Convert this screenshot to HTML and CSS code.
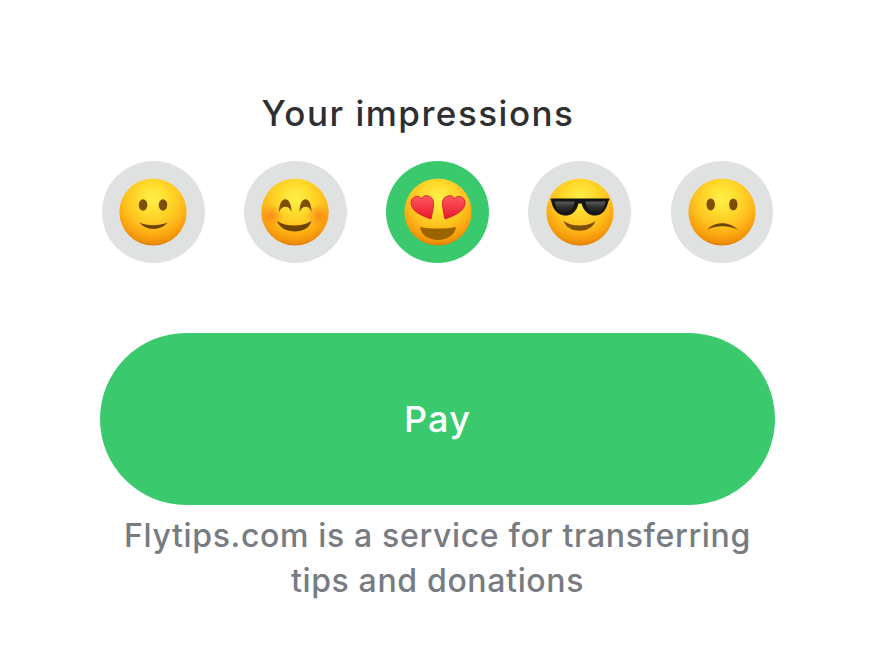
FILE: index.html
```html
<!DOCTYPE html>
<html lang="en">
<head>
	<meta charset="UTF-8">
	<title>Your impressions</title>
	<link rel="stylesheet" href="styles.css">
</head>
<body>
	<svg class="defs" width="0" height="0" aria-hidden="true">
		<defs>
			<radialGradient id="skin" cx="50%" cy="30%" r="72%">
				<stop offset="0" stop-color="#fff04a"/>
				<stop offset=".3" stop-color="#ffdc2e"/>
				<stop offset=".58" stop-color="#ffc21f"/>
				<stop offset=".8" stop-color="#f9a20e"/>
				<stop offset=".92" stop-color="#ee8f08"/>
				<stop offset="1" stop-color="#c97204"/>
			</radialGradient>
			<radialGradient id="blush">
				<stop offset="0" stop-color="#f98a14" stop-opacity=".95"/>
				<stop offset="1" stop-color="#f98a14" stop-opacity="0"/>
			</radialGradient>
			<linearGradient id="heart" x1="0" y1="0" x2="0" y2="1">
				<stop offset="0" stop-color="#ff5a5f"/>
				<stop offset="1" stop-color="#e8182c"/>
			</linearGradient>
			<linearGradient id="lens" x1="0" y1="0" x2="0" y2="1">
				<stop offset="0" stop-color="#5a5a5a"/>
				<stop offset=".5" stop-color="#303030"/>
				<stop offset="1" stop-color="#1c1c1c"/>
			</linearGradient>
		</defs>
	</svg>
	<div class="wrap">
		<h1 class="title">Your impressions</h1>
		<div class="faces">
			<div class="face">
				<svg class="emoji" viewBox="0 0 68 68">
					<circle cx="34" cy="34" r="33.600" fill="url(#skin)"/>
					<ellipse cx="24" cy="27" rx="4.300" ry="5.800" fill="#7c4e06"/>
					<ellipse cx="44" cy="27" rx="4.300" ry="5.800" fill="#7c4e06"/>
					<path d="M20.500 44.500C28 48 40 48 48.500 44.500C42 53 27 53 20.500 44.500Z" fill="#6e4404"/>
				</svg>
			</div>
			<div class="face">
				<svg class="emoji" viewBox="0 0 68 68">
					<circle cx="34" cy="34" r="33.600" fill="url(#skin)"/>
					<circle cx="10" cy="38" r="12" fill="url(#blush)"/>
					<circle cx="58" cy="38" r="12" fill="url(#blush)"/>
					<path d="M18 34C18 17 30.500 17 30.500 34C28 27 21 27 18 34Z" fill="#7c4e06"/>
					<path d="M38.500 34C38.500 17 50.500 17 50.500 34C48.500 27 41 27 38.500 34Z" fill="#7c4e06"/>
					<path d="M16 43C25 49 41 49 50.500 43C47 57 21 57 16 43Z" fill="#6e4404"/>
				</svg>
			</div>
			<div class="face on">
				<svg class="emoji" viewBox="0 0 68 68">
					<circle cx="34" cy="34" r="33.600" fill="url(#skin)"/>
					<path d="M16 49C27 51 41 51 52 49C51 57 43 62 34 62C25 62 17 57 16 49Z" fill="#9c6400"/>
					<path d="M27 41C18 38 7 33 7 25C7 20 11 18 14 18.500C16 19 17 20 18 21C18.500 18 21 17 24 18C28 19 30 22 29.500 27C29 32 28 37 27 41Z" fill="url(#heart)" stroke="#c9142a" stroke-width=".8"/>
					<path d="M41 41C50 38 61 33 61 25C61 20 57 18 54 18.500C52 19 51 20 50 21C49.500 18 47 17 44 18C40 19 38 22 38.500 27C39 32 40 37 41 41Z" fill="url(#heart)" stroke="#c9142a" stroke-width=".8"/>
				</svg>
			</div>
			<div class="face">
				<svg class="emoji" viewBox="0 0 68 68">
					<circle cx="34" cy="34" r="33.600" fill="url(#skin)"/>
					<path d="M5 21L63 21L62 23C60 30 58 36 50 37C42 38 37 31 36 25L32 25C31 31 27 38 18 37C10 36 7 29 6 24Z" fill="#161616" stroke="#111" stroke-width="1"/>
					<path d="M8.500 23.500L28.500 23.500C28 29 25 35 18 34.500C12 34 9.500 29 8.500 23.500Z" fill="url(#lens)"/>
					<path d="M39.500 23.500L59.500 23.500C58.500 29 56 34 50 34.500C43 35 40 29 39.500 23.500Z" fill="url(#lens)"/>
					<path d="M17.500 43C26 49 41 49 49.500 43C45 56 22 56 17.500 43Z" fill="#7c4e06"/>
				</svg>
			</div>
			<div class="face">
				<svg class="emoji" viewBox="0 0 68 68">
					<circle cx="34" cy="34" r="33.600" fill="url(#skin)"/>
					<ellipse cx="22.700" cy="26.500" rx="4.200" ry="6" fill="#7c4e06"/>
					<ellipse cx="45.300" cy="26.500" rx="4.200" ry="6" fill="#7c4e06"/>
					<path d="M19 52C26 43 42 43 50 52C42 47 27 47 19 52Z" fill="#6e4404"/>
				</svg>
			</div>
		</div>
		<a class="pay" href="#">Pay</a>
		<p class="note">Flytips.com is a service for transferring<br>tips and donations</p>
	</div>
</body>
</html>
```

FILE: styles.css
```css
html,body{margin:0;padding:0;background:#fff;}
body{font-family:"Inter","Roboto",sans-serif;}
.defs{display:block;height:0;}
.wrap{width:675px;margin-left:100px;padding-top:92px;}
.title{margin:0 39px 0 0;font-size:35px;line-height:42px;font-weight:500;letter-spacing:1.5px;color:#2d2f33;text-align:center;}
.faces{display:flex;justify-content:space-between;padding:27px 2px 0;}
.face{width:102.5px;height:102px;border-radius:50%;background:#e0e2e2;display:flex;align-items:center;justify-content:center;}
.face.on{background:#3bc96d;}
.emoji{width:68px;height:68px;display:block;}
.pay{display:block;height:172px;margin-top:70px;border-radius:86px;background:#3bc96d;color:#fff;font-size:36px;font-weight:500;letter-spacing:1.2px;line-height:172px;text-align:center;text-decoration:none;}
.note{margin:8px 0 0;font-size:32px;line-height:45px;font-weight:500;letter-spacing:.65px;color:#777b82;text-align:center;}
```
